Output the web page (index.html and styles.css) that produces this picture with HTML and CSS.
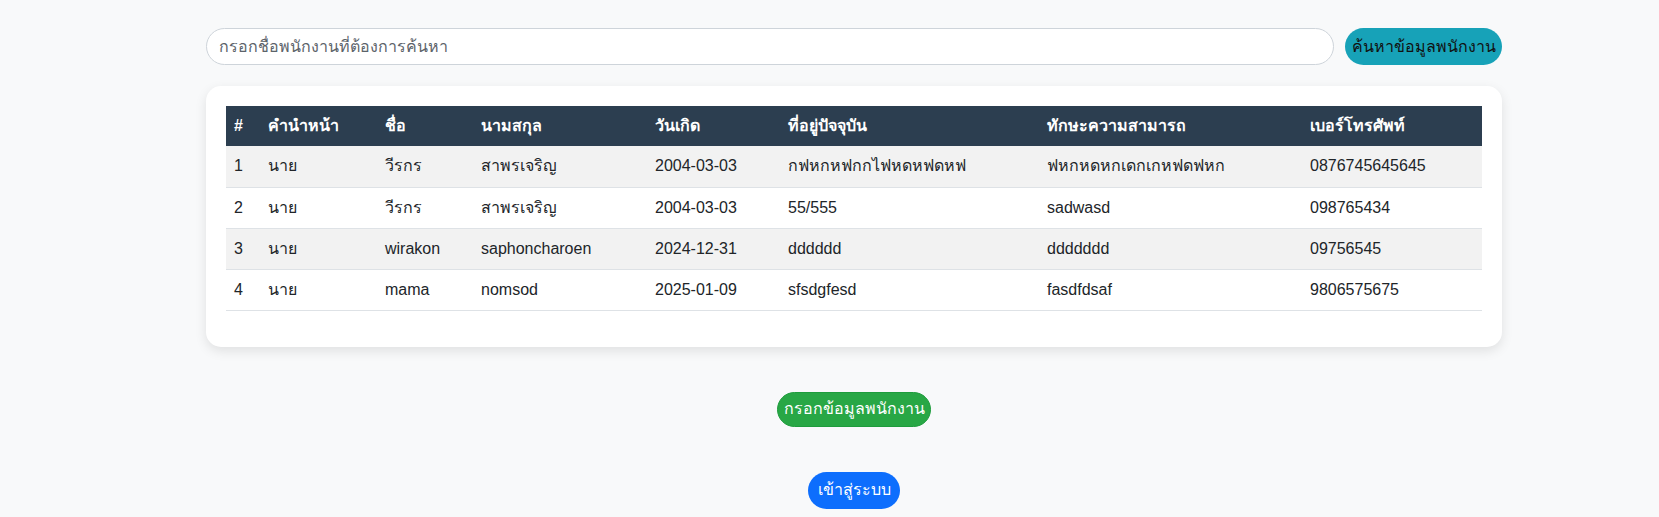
FILE: index.html
```html
<!DOCTYPE html>
<html lang="th">
<head>
<meta charset="utf-8">
<title>ข้อมูลพนักงาน</title>
<link rel="stylesheet" href="styles.css">
</head>
<body>
<div class="page">
  <div class="wrap">
    <form class="search">
      <input class="search-input" type="text" placeholder="กรอกชื่อพนักงานที่ต้องการค้นหา">
      <button type="button" class="btn btn-info">ค้นหาข้อมูลพนักงาน</button>
    </form>
    <div class="card">
      <table class="table">
        <colgroup>
          <col class="c-no"><col class="c-title"><col class="c-name"><col class="c-last"><col class="c-birth"><col class="c-addr"><col class="c-skill"><col class="c-phone">
        </colgroup>
        <thead>
          <tr><th>#</th><th>คำนำหน้า</th><th>ชื่อ</th><th>นามสกุล</th><th>วันเกิด</th><th>ที่อยู่ปัจจุบัน</th><th>ทักษะความสามารถ</th><th>เบอร์โทรศัพท์</th></tr>
        </thead>
        <tbody>
          <tr><td>1</td><td>นาย</td><td>วีรกร</td><td>สาพรเจริญ</td><td>2004-03-03</td><td>กฟหกหฟกกไฟหดหฟดหฟ</td><td>ฟหกหดหกเดกเกหฟดฟหก</td><td>0876745645645</td></tr>
          <tr><td>2</td><td>นาย</td><td>วีรกร</td><td>สาพรเจริญ</td><td>2004-03-03</td><td>55/555</td><td>sadwasd</td><td>098765434</td></tr>
          <tr><td>3</td><td>นาย</td><td>wirakon</td><td>saphoncharoen</td><td>2024-12-31</td><td>dddddd</td><td>ddddddd</td><td>09756545</td></tr>
          <tr><td>4</td><td>นาย</td><td>mama</td><td>nomsod</td><td>2025-01-09</td><td>sfsdgfesd</td><td>fasdfdsaf</td><td>9806575675</td></tr>
        </tbody>
      </table>
    </div>
    <div class="actions">
      <button type="button" class="btn btn-success">กรอกข้อมูลพนักงาน</button>
      <button type="button" class="btn btn-primary">เข้าสู่ระบบ</button>
    </div>
  </div>
</div>
</body>
</html>
```
FILE: styles.css
```css
* { box-sizing: border-box; }
html, body { margin: 0; padding: 0; }
body {
  background: #f8f9fa;
  font-family: "Liberation Sans", Arial, "Noto Sans", sans-serif;
  font-size: 16px;
  line-height: 1.5;
  color: #212529;
}
.page {
  padding-left: 49px;
  padding-top: 28px;
}
.wrap {
  width: 1296px;
  margin: 0 auto;
  display: flex;
  flex-direction: column;
}
.search {
  display: flex;
  gap: 11px;
  margin: 0;
}
.search-input {
  flex: 1;
  height: 37px;
  border: 1px solid #ced4da;
  border-radius: 20px;
  padding: 0 12px;
  font: inherit;
  font-size: 16px;
  color: #212529;
  background: #fff;
}
.search-input::placeholder { color: #5c636a; }
.btn {
  font: inherit;
  font-size: 16px;
  font-weight: 500;
  border: 1px solid transparent;
  border-radius: 20px;
  cursor: pointer;
  line-height: 1.5;
  white-space: nowrap;
}
.btn-info {
  width: 157px;
  height: 37px;
  background: #17a2b8;
  color: #111;
  padding: 0;
}
.card {
  margin-top: 21px;
  background: #fff;
  border-radius: 15px;
  padding: 20px;
  box-shadow: 0 4px 12px rgba(0, 0, 0, 0.1);
}
.table {
  width: 100%;
  border-collapse: collapse;
  table-layout: fixed;
  margin-bottom: 16px;
}
.c-no { width: 34px; }
.c-title { width: 117px; }
.c-name { width: 96px; }
.c-last { width: 174px; }
.c-birth { width: 133px; }
.c-addr { width: 259px; }
.c-skill { width: 263px; }
.c-phone { width: 180px; }
.table th, .table td {
  text-align: left;
  padding: 8px;
  white-space: nowrap;
  overflow: hidden;
}
.table th {
  background: #2c3e50;
  color: #fff;
  font-weight: 700;
  height: 40px;
}
.table td {
  height: 41px;
  border-bottom: 1px solid #dee2e6;
  color: #212529;
}
.table tbody tr:nth-child(odd) td { background: #f2f2f2; }
.actions {
  display: flex;
  flex-direction: column;
  align-items: center;
  gap: 45px;
  margin-top: 45px;
}
.btn-success {
  height: 35px;
  width: 154px;
  padding: 0;
  background: #28a745;
  border-color: #1e9c3c;
  color: #fff;
}
.btn-primary {
  height: 37px;
  width: 92px;
  padding: 0;
  background: #0d6efd;
  color: #fff;
}
```
